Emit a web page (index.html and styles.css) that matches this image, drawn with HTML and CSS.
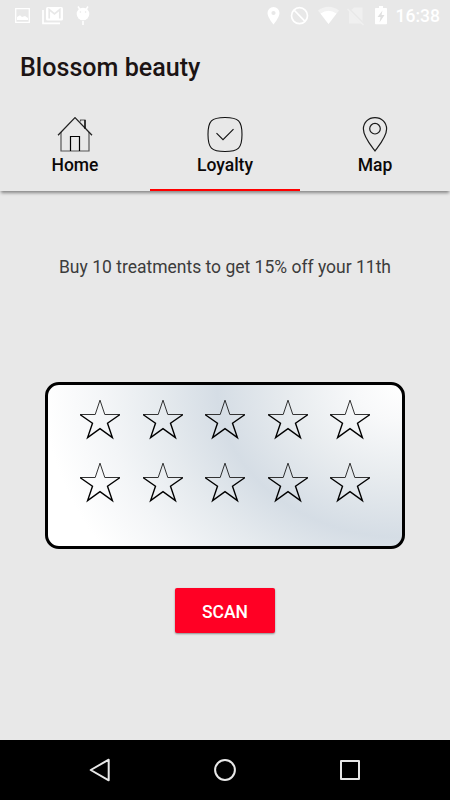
FILE: index.html
```html
<!DOCTYPE html>
<html lang="en">
<head>
<meta charset="utf-8">
<title>Blossom beauty</title>
<link rel="stylesheet" href="styles.css">
</head>
<body>
<svg class="defs" width="0" height="0" aria-hidden="true">
  <symbol id="star" viewBox="0 0 42 42">
    <path class="star-top" d="M16.200 15.500L21 1.200l4.800 14.300"/>
    <path class="star-arms" d="M25.800 15.500H41M1 15.500h15.200"/>
    <path class="star-bottom" d="M40.700 15.800L28.500 24.300l4.900 14.300L21 29.700 8.600 38.600l4.900-14.300L1.300 15.800"/>
  </symbol>
</svg>
<div class="phone">
  <div class="status">
    <div class="status-group left">
      <svg width="16" height="32" viewBox="0 0 16 32"><path d="M.7 8.700h13.600v13.600H.7z" fill="none" stroke="#fff" stroke-width="1.300"/><path d="M2 20v-3l3-1.700 2 1.700 3-1 3 2v2z" fill="#fff"/></svg>
      <svg width="22" height="32" viewBox="0 0 22 32"><path d="M1 10v13.300h17" fill="none" stroke="#fff" stroke-width="1.700"/><rect x="4" y="7" width="17" height="13.500" rx="1.500" fill="#fff"/><path d="M7.200 18.500V9.500l5.300 4.500 5.300-4.500v9" fill="none" stroke="#e8e8e8" stroke-width="1.700"/></svg>
      <svg width="14" height="32" viewBox="0 0 14 32"><circle cx="7" cy="14" r="6.300" fill="#fff"/><path d="M2 6.500l2 3M12 6.500l-2 3M7 21v4" stroke="#fff" stroke-width="1.500"/><circle cx="4.400" cy="12" r=".8" fill="#e8e8e8"/><circle cx="9.600" cy="12" r=".8" fill="#e8e8e8"/></svg>
    </div>
    <div class="status-group right">
      <svg width="13" height="32" viewBox="0 0 13 32"><path fill="#fff" fill-rule="evenodd" d="M6.500 7A6 6 0 0 0 .5 13c0 4.500 6 11.500 6 11.500s6-7 6-11.500a6 6 0 0 0-6-6zm0 3.900a2.100 2.100 0 1 1 0 4.200 2.100 2.100 0 0 1 0-4.200z"/></svg>
      <svg width="19" height="32" viewBox="0 0 19 32"><circle cx="9.500" cy="15.700" r="8" fill="none" stroke="#fff" stroke-width="1.700"/><path d="M4 10l11 11.400" stroke="#fff" stroke-width="1.700"/></svg>
      <svg width="23" height="32" viewBox="0 0 23 32"><path d="M1 10.500Q11.500 3 22 10.500L11.500 24z" fill="#f2f2f2"/><path d="M3.500 13.500Q11.500 8 19.500 13.500L11.500 24z" fill="#fff"/></svg>
      <svg width="18" height="32" viewBox="0 0 18 32"><path d="M2 12l5-4.500h8.500V23.500H2z" fill="#f0f0f0"/><path d="M1 8.500l16 16" stroke="#e8e8e8" stroke-width="3"/><path d="M.5 9l16 16" stroke="#f0f0f0" stroke-width="1.500"/></svg>
      <svg width="12" height="32" viewBox="0 0 12 32"><path d="M4 6h4v2h3.200q.8 0 .8.800v14.700q0 .8-.8.800H.8q-.8 0-.8-.8V8.800Q0 8 .8 8H4z" fill="#fff"/><path d="M7.500 10.500L2.500 17h3l-1 5.500 5-7.500H6.500z" fill="#e0e0e0"/></svg>
      <span class="clock">16:38</span>
    </div>
  </div>
  <header>
    <h1>Blossom beauty</h1>
    <nav>
      <div class="tab">
        <svg width="38" height="38" viewBox="0 0 38 38" fill="none"><path d="M5 17v19h28V17M24.500 6.500V5H29v9" stroke="#555" stroke-width="1.200"/><path d="M2 20.200L19 2.600l17 17.600" stroke="#222" stroke-width="1.300"/><path d="M14.500 36V21.500h9V36M29 5v8.500" stroke="#000" stroke-width="1.200"/></svg>
        <span>Home</span>
      </div>
      <div class="tab active">
        <svg width="38" height="38" viewBox="0 0 38 38" fill="none" stroke="#111" stroke-width="1.100"><path d="M19 2.500c13.500 0 17 3.500 17 17s-3.500 17-17 17-17-3.500-17-17 3.500-17 17-17z"/><path d="M10.500 18.200l6.500 6.500 10.500-10.500"/></svg>
        <span>Loyalty</span>
      </div>
      <div class="tab">
        <svg width="38" height="38" viewBox="0 0 38 38" fill="none" stroke="#1a1a1a" stroke-width="1.200"><path d="M19 2.600c-6.700 0-11.600 4.900-11.600 11.400 0 8 8 17 11.600 22 3.600-5 11.600-14 11.600-22 0-6.500-4.900-11.400-11.600-11.400z"/><circle cx="19" cy="13.700" r="5.300"/></svg>
        <span>Map</span>
      </div>
    </nav>
  </header>
  <main>
    <p class="offer">Buy 10 treatments to get 15% off your 11th</p>
    <div class="card">
      <svg><use href="#star"/></svg><svg><use href="#star"/></svg><svg><use href="#star"/></svg><svg><use href="#star"/></svg><svg><use href="#star"/></svg>
      <svg><use href="#star"/></svg><svg><use href="#star"/></svg><svg><use href="#star"/></svg><svg><use href="#star"/></svg><svg><use href="#star"/></svg>
    </div>
    <button class="scan">SCAN</button>
  </main>
  <footer>
    <svg width="24" height="26" viewBox="0 0 24 26"><path d="M2.700 13L20.700 2.700v20.600z"/></svg>
    <svg width="24" height="26" viewBox="0 0 24 26"><circle cx="12" cy="13" r="9.900"/></svg>
    <svg width="24" height="26" viewBox="0 0 24 26"><rect x="3" y="4" width="18" height="18"/></svg>
  </footer>
</div>
</body>
</html>
```

FILE: styles.css
```css
* { box-sizing: border-box; }
body { margin: 0; font-family: Roboto, sans-serif; background: #e8e8e8; }
svg { display: block; flex: none; }
.defs { position: absolute; }
.phone { display: flex; flex-direction: column; width: 450px; height: 800px; overflow: hidden; }

.status { display: flex; justify-content: space-between; height: 32px; padding: 0 10px 0 15px; }
.status-group { display: flex; align-items: center; }
.left { gap: 11px; }
.left svg:last-child { margin-left: 1px; }
.right { gap: 10px; }
.right svg:nth-child(3) { margin: 0 -3px 0 -2px; }
.clock { color: #fff; font-size: 17.500px; font-weight: 500; line-height: 32px; margin-left: -1.500px; }

header {
  display: flex;
  flex-direction: column;
  height: 159px;
  background: #e8e8e8;
  box-shadow: 0 3px 3px -1px rgba(0, 0, 0, .42);
}
h1 { margin: 0; padding: 18px 20px 0; height: 83px; font-size: 25.100px; line-height: 36px; font-weight: 500; color: #1c1414; }
nav { display: grid; grid-template-columns: repeat(3, 1fr); flex: 1; }
.tab { display: flex; flex-direction: column; align-items: center; border-bottom: 2.500px solid transparent; }
.tab span { font-size: 17.500px; line-height: 22px; font-weight: 500; color: #0c0808; margin-top: 1px; }
.active { border-bottom-color: #f00; }

main { display: flex; flex-direction: column; align-items: center; height: 549px; }
.offer { margin: 64px 0 0; font-size: 17.500px; line-height: 24px; color: #3c3c3c; white-space: nowrap; }
.card {
  display: grid;
  grid-template-columns: repeat(5, 42px);
  grid-auto-rows: 42px;
  column-gap: 20.500px;
  row-gap: 20.500px;
  justify-content: center;
  width: 360px;
  height: 167px;
  margin-top: 103px;
  padding-top: 14px;
  border: 3px solid #000;
  border-left-width: 3.500px;
  border-radius: 14px;
  background: radial-gradient(ellipse 370px 305px at top right, #fff 0, #f8f9fa 12%, #e8ecef 30%, #d5dde5 50%, #e5eaee 65%, #f3f5f7 80%, #fff 97%);
}
.card svg { width: 42px; height: 42px; }
.star-top, .star-arms, .star-bottom { fill: none; stroke: #000; stroke-width: .8px; }
.star-arms { stroke-width: 1px; stroke: #333; }
.star-bottom { stroke-width: 1.400px; }
.scan {
  width: 100px;
  height: 45px;
  margin-top: 39px;
  padding: 2px 0 0;
  border: 0;
  border-radius: 2px;
  background: #ff0024;
  box-shadow: 0 1px 2px rgba(0, 0, 0, .4);
  color: #fff;
  font: 500 17.500px/20px Roboto, sans-serif;
}

footer { display: flex; justify-content: center; align-items: center; gap: 101px; height: 60px; background: #000; }
footer svg { fill: none; stroke: #e8e8e8; stroke-width: 2px; stroke-linejoin: round; }
```
